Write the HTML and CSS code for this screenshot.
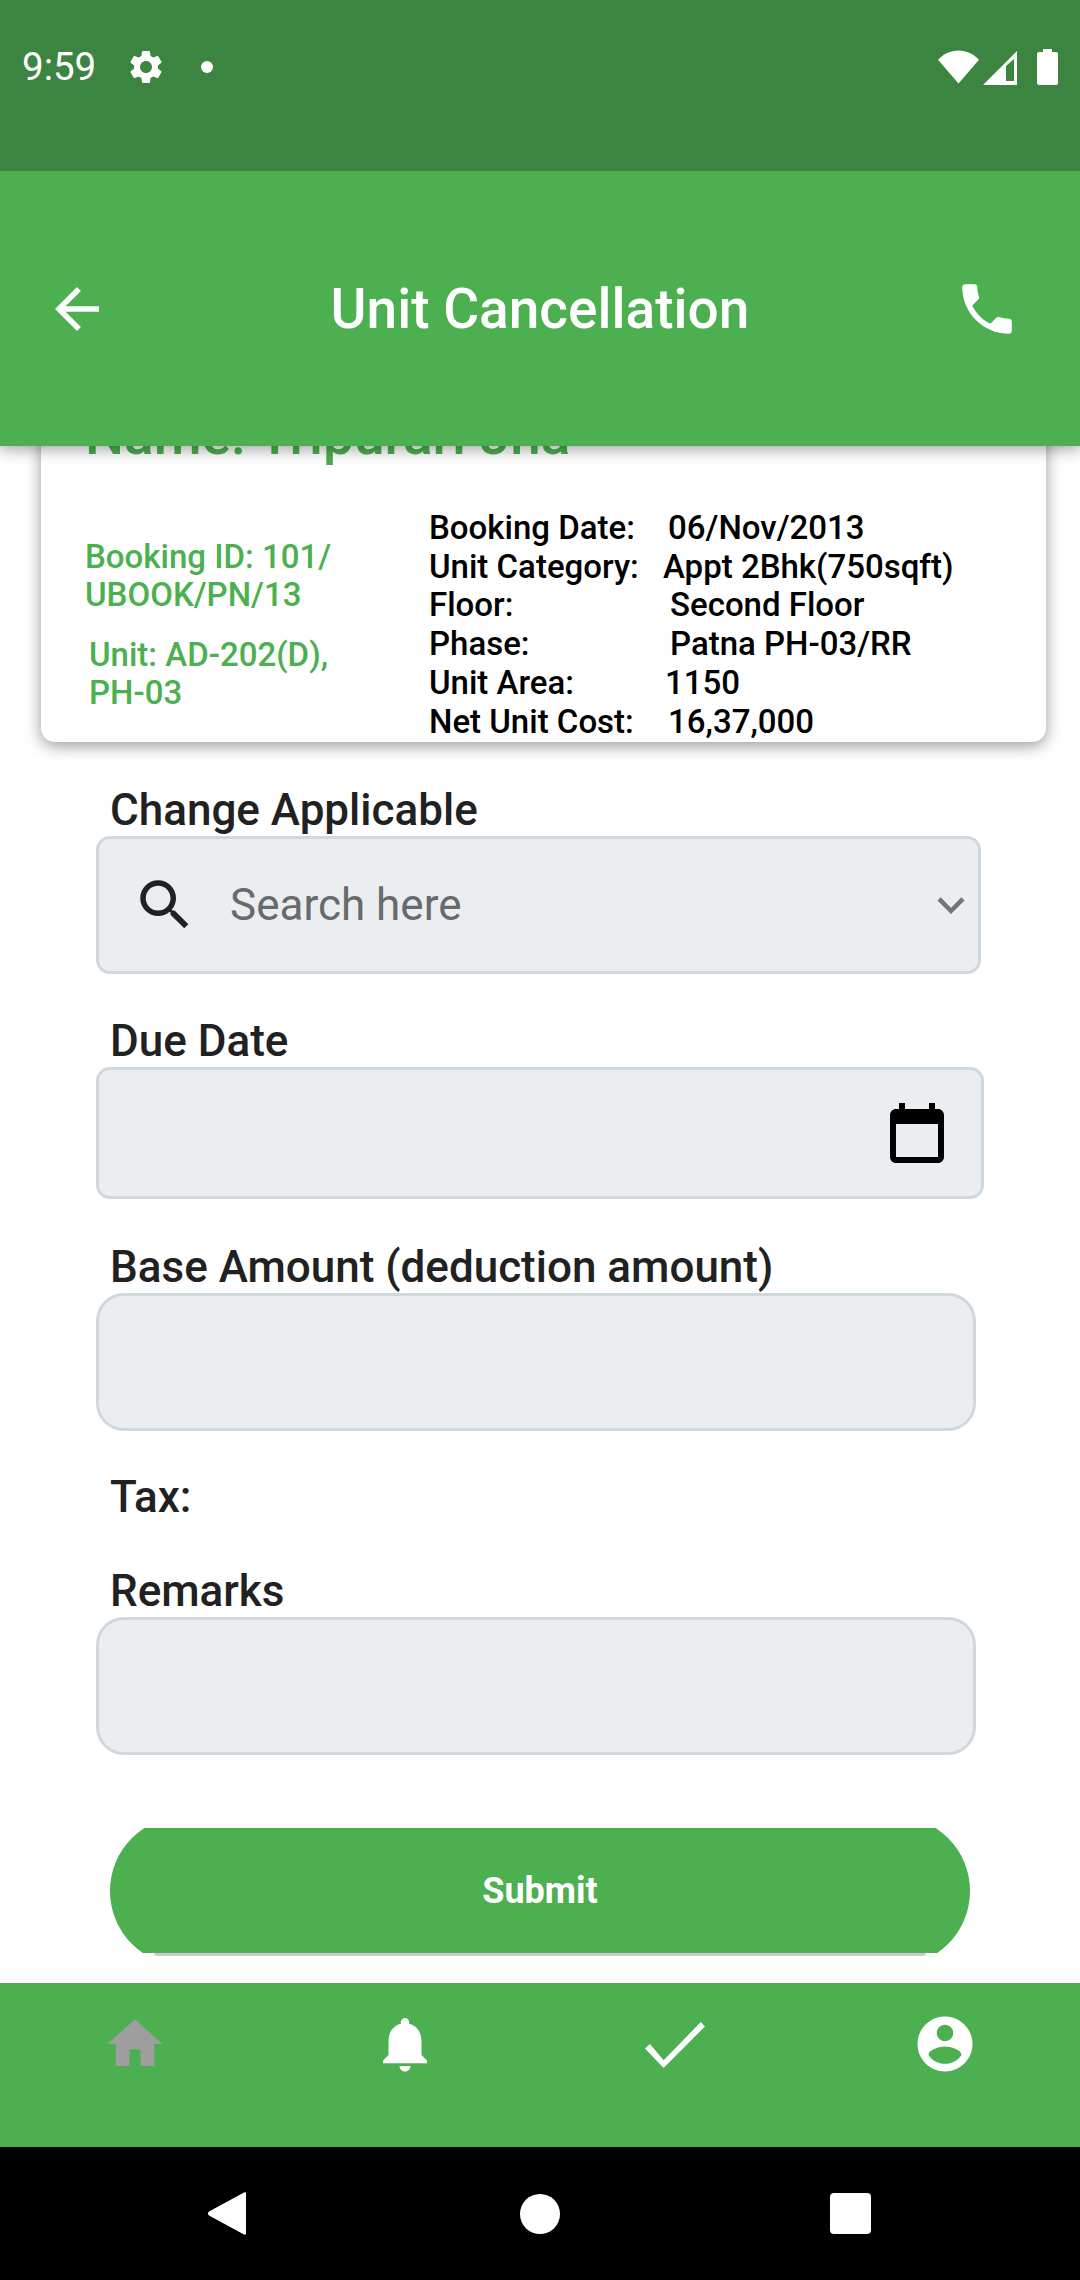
FILE: index.html
```html
<!DOCTYPE html>
<html lang="en">
<head>
  <meta charset="UTF-8">
  <meta name="viewport" content="width=device-width, initial-scale=1.0">
  <title>Unit Cancellation</title>
  <link rel="stylesheet" href="styles.css">
</head>
<body>
  <div class="status-bar">
    <div class="status-left">
      <span class="clock">9:59</span>
      <svg class="status-gear" viewBox="0 0 24 24"><path fill="#fff" d="M19.14 12.94c.04-.3.06-.61.06-.94 0-.32-.02-.64-.07-.94l2.03-1.58a.49.49 0 0 0 .12-.61l-1.92-3.32a.488.488 0 0 0-.59-.22l-2.39.96c-.5-.38-1.03-.7-1.62-.94l-.36-2.54a.484.484 0 0 0-.48-.41h-3.84c-.24 0-.43.17-.47.41l-.36 2.54c-.59.24-1.13.57-1.62.94l-2.39-.96c-.22-.08-.47 0-.59.22L2.74 8.87c-.12.21-.08.47.12.61l2.03 1.58c-.05.3-.09.63-.09.94s.02.64.07.94l-2.03 1.58a.49.49 0 0 0-.12.61l1.92 3.32c.12.22.37.29.59.22l2.39-.96c.5.38 1.03.7 1.62.94l.36 2.54c.05.24.24.41.48.41h3.84c.24 0 .44-.17.47-.41l.36-2.54c.59-.24 1.13-.56 1.62-.94l2.39.96c.22.08.47 0 .59-.22l1.92-3.32c.12-.22.07-.47-.12-.61l-2.01-1.58zM12 15.6c-1.98 0-3.6-1.62-3.6-3.6s1.62-3.6 3.6-3.6 3.6 1.62 3.6 3.6-1.62 3.6-3.6 3.6z"/></svg>
      <span class="status-dot"></span>
    </div>
    <div class="status-right">
      <svg class="status-wifi" viewBox="0 0 42 34"><path fill="#fff" d="M0 9.500C5.500 3.600 12.800 0 21 0s15.500 3.600 21 9.500L21 34z"/></svg>
      <svg class="status-signal" viewBox="0 0 34 34"><path fill="#fff" fill-rule="evenodd" d="M34 0v34H0zM31 8l-8 7v15h8z"/></svg>
      <svg class="status-battery" viewBox="0 0 21 36"><path fill="#fff" d="M6 0h9v3h4a2 2 0 0 1 2 2v29a2 2 0 0 1-2 2H2a2 2 0 0 1-2-2V5a2 2 0 0 1 2-2h4z"/></svg>
    </div>
  </div>

  <header class="app-bar">
    <svg class="back-icon" viewBox="0 0 24 24"><path fill="#fff" d="M20 11H7.830l5.590-5.590L12 4l-8 8 8 8 1.410-1.410L7.830 13H20v-2z"/></svg>
    <h1 class="app-title">Unit Cancellation</h1>
    <svg class="call-icon" viewBox="0 0 24 24"><path fill="#fff" d="M6.620 10.790c1.440 2.830 3.760 5.140 6.590 6.590l2.200-2.200c.27-.27.670-.36 1.020-.24 1.120.37 2.330.57 3.570.57.550 0 1 .45 1 1V20c0 .55-.45 1-1 1-9.390 0-17-7.610-17-17 0-.55.450-1 1-1h3.500c.55 0 1 .45 1 1 0 1.250.2 2.450.57 3.570.11.350.03.740-.25 1.020l-2.200 2.200z"/></svg>
  </header>

  <main class="content">
    <section class="card">
      <div class="card-name">Name: Tripurari Jha</div>
      <div class="card-body">
        <div class="card-left">
          <p class="booking-id">Booking ID: 101/<br>UBOOK/PN/13</p>
          <p class="unit-id">Unit: AD-202(D),<br>PH-03</p>
        </div>
        <div class="card-right">
          <div class="info-row"><span class="info-key">Booking Date:</span><span class="v-date">06/Nov/2013</span></div>
          <div class="info-row"><span class="info-key">Unit Category:</span><span class="v-cat">Appt 2Bhk(750sqft)</span></div>
          <div class="info-row"><span class="info-key">Floor:</span><span class="v-floor">Second Floor</span></div>
          <div class="info-row"><span class="info-key">Phase:</span><span class="v-floor">Patna PH-03/RR</span></div>
          <div class="info-row"><span class="info-key">Unit Area:</span><span class="v-area">1150</span></div>
          <div class="info-row"><span class="info-key">Net Unit Cost:</span><span class="v-date">16,37,000</span></div>
        </div>
      </div>
    </section>

    <form class="form">
      <div class="field field-change">
        <label class="field-label">Change Applicable</label>
        <div class="input input-search">
          <svg class="search-icon" viewBox="0 0 24 24"><path fill="#212121" d="M15.500 14h-.79l-.28-.27A6.471 6.471 0 0 0 16 9.500 6.500 6.500 0 1 0 9.500 16c1.610 0 3.090-.59 4.230-1.570l.27.28v.79l5 4.990L20.490 19l-4.990-5zm-6 0C7.010 14 5 11.990 5 9.500S7.010 5 9.500 5 14 7.010 14 9.500 11.990 14 9.500 14z"/></svg>
          <span class="placeholder">Search here</span>
          <svg class="chevron-icon" viewBox="0 0 24 24"><path fill="#757575" d="M16.590 8.590 12 13.170 7.410 8.590 6 10l6 6 6-6z"/></svg>
        </div>
      </div>

      <div class="field field-date">
        <label class="field-label">Due Date</label>
        <div class="input input-date">
          <svg class="calendar-icon" viewBox="0 0 24 24"><path fill="#000" d="M19 3h-1V1h-2v2H8V1H6v2H5c-1.100 0-2 .9-2 2v14c0 1.100.9 2 2 2h14c1.100 0 2-.9 2-2V5c0-1.100-.9-2-2-2zm0 16H5V8h14v11z"/></svg>
        </div>
      </div>

      <div class="field field-base">
        <label class="field-label">Base Amount (deduction amount)</label>
        <div class="input input-round"></div>
      </div>

      <div class="field-label tax-label">Tax:</div>

      <div class="field field-remarks">
        <label class="field-label">Remarks</label>
        <div class="input input-round"></div>
      </div>

      <div class="submit-wrap">
        <button class="submit-btn" type="button">Submit</button>
      </div>
    </form>
  </main>

  <nav class="bottom-nav">
    <svg class="nav-icon" viewBox="0 0 24 24"><path fill="#9e9e9e" d="M10 20v-6h4v6h5v-8h3L12 3 2 12h3v8z"/></svg>
    <svg class="nav-icon" viewBox="0 0 24 24"><path fill="#fff" d="M12 22c1.100 0 2-.9 2-2h-4c0 1.100.9 2 2 2zm6-6v-5c0-3.070-1.630-5.640-4.500-6.320V4c0-.83-.67-1.500-1.500-1.500s-1.500.67-1.500 1.500v.68C7.640 5.360 6 7.920 6 11v5l-2 2v1h16v-1l-2-2z"/></svg>
    <svg class="nav-check" viewBox="0 0 60.300 46"><path fill="#fff" d="M0 26.600 5 22l13.700 16.300L56 0l4.300 4.300L18.700 46z"/></svg>
    <svg class="nav-icon" viewBox="0 0 24 24"><path fill="#fff" d="M12 2C6.480 2 2 6.480 2 12s4.480 10 10 10 10-4.480 10-10S17.520 2 12 2zm0 3c1.660 0 3 1.340 3 3s-1.340 3-3 3-3-1.340-3-3 1.340-3 3-3zm0 14.200c-2.500 0-4.710-1.280-6-3.220.03-1.990 4-3.080 6-3.080 1.990 0 5.970 1.090 6 3.080-1.290 1.940-3.500 3.220-6 3.220z"/></svg>
  </nav>

  <div class="system-nav">
    <svg class="sys-back" viewBox="1 0 38 45"><path fill="#fff" d="M37 1.500c1-.8 2-.2 2 1v40c0 1.200-1 1.800-2 1L2 24.500c-1.400-1-1.400-3 0-4z"/></svg>
    <span class="sys-home"></span>
    <span class="sys-recent"></span>
  </div>
</body>
</html>
```

FILE: styles.css
```css
* {
  box-sizing: border-box;
}
html, body {
  margin: 0;
  height: 2280px;
  overflow: hidden;
}
body {
  display: flex;
  flex-direction: column;
  width: 1080px;
  font-family: Roboto, "Liberation Sans", sans-serif;
  background-color: #fff;
  color: #212121;
}

/* status bar */
.status-bar {
  position: relative;
  z-index: 3;
  display: flex;
  justify-content: space-between;
  align-items: flex-start;
  flex: none;
  height: 171px;
  padding: 47px 22px 0 22px;
  background-color: #3b8540;
  color: #fff;
}
.status-left {
  display: flex;
  align-items: center;
  height: 40px;
}
.clock {
  width: 73px;
  font-size: 38.5px;
  line-height: 40px;
  white-space: nowrap;
}
.status-gear {
  width: 40px;
  height: 40px;
  margin-left: 31px;
}
.status-dot {
  width: 12px;
  height: 12px;
  margin-left: 35px;
  border-radius: 50%;
  background-color: #fff;
}
.status-right {
  display: flex;
  align-items: flex-end;
  height: 38px;
}
.status-wifi {
  width: 41px;
  height: 34px;
  margin-bottom: 1px;
}
.status-signal {
  width: 34px;
  height: 34px;
  margin-left: 4px;
}
.status-battery {
  width: 21px;
  height: 36px;
  margin-left: 20px;
}

/* app bar */
.app-bar {
  position: relative;
  z-index: 2;
  display: flex;
  justify-content: space-between;
  align-items: center;
  flex: none;
  height: 275px;
  padding: 0 60px 0 44px;
  background-color: #4caf50;
  box-shadow: 0 4px 14px rgba(0, 0, 0, 0.35);
}
.back-icon {
  width: 66px;
  height: 66px;
}
.app-title {
  margin: 0 0 0 16px;
  font-size: 55px;
  font-weight: 500;
  color: #fff;
}
.call-icon {
  width: 66px;
  height: 66px;
}

/* main */
.content {
  flex: 1;
  overflow: hidden;
  min-height: 0;
}
.card {
  height: 337px;
  margin: -41px 34px 0 41px;
  padding: 0 20px 0 44px;
  background-color: #fff;
  border-radius: 0 0 14px 14px;
  box-shadow: 0 4px 16px rgba(0, 0, 0, 0.4);
}
.card-name {
  height: 60px;
  font-size: 55px;
  line-height: 60px;
  font-weight: 500;
  color: #4caf50;
  white-space: nowrap;
}
.card-body {
  display: flex;
}
.card-left {
  width: 344px;
  padding-top: 73px;
  font-size: 33px;
  line-height: 38px;
  font-weight: 500;
  color: #4caf50;
}
.booking-id {
  margin: 0;
}
.unit-id {
  margin: 22px 0 0 4px;
}
.card-right {
  padding-top: 44px;
  font-size: 33px;
  line-height: 38.7px;
  font-weight: 500;
  color: #000;
}
.info-row {
  display: flex;
  white-space: nowrap;
}
.info-key {
  width: 233px;
}
.v-cat {
  margin-left: 1px;
}
.v-area {
  margin-left: 3px;
}
.v-floor {
  margin-left: 8px;
}
.v-date {
  margin-left: 6px;
}

/* form */
.form {
  padding: 0 96px;
}
.field-label {
  display: block;
  margin-left: 14px;
  font-size: 44px;
  line-height: 51px;
  font-weight: 500;
  color: #212121;
}
.field-change {
  margin-top: 43px;
}
.field-date {
  margin-top: 42px;
}
.field-base {
  margin-top: 43px;
}
.tax-label {
  margin-top: 41px;
}
.field-remarks {
  margin-top: 43px;
}
.input {
  display: flex;
  align-items: center;
  background-color: #eaeef1;
  border: 3px solid #cfd8dc;
  border-radius: 14px;
}
.input-search {
  width: 885px;
  height: 138px;
  padding: 0 0 0 33px;
}
.input-date {
  justify-content: flex-end;
  width: 888px;
  height: 132px;
  padding-right: 28px;
}
.input-round {
  width: 880px;
  height: 138px;
  border-radius: 28px;
}
.search-icon {
  width: 66px;
  height: 66px;
}
.placeholder {
  flex: 1;
  margin-left: 32px;
  font-size: 44px;
  color: #666a6d;
}
.chevron-icon {
  width: 54px;
  height: 54px;
}
.calendar-icon {
  width: 72px;
  height: 72px;
  margin-top: 5px;
}
.submit-wrap {
  display: flow-root;
  width: 860px;
  height: 125px;
  margin: 73px 0 0 14px;
}
.submit-wrap::after {
  content: "";
  display: block;
  height: 3px;
  margin: -12.5px 44px 0;
  border-radius: 0 0 8px 8px;
  background-color: rgba(0, 0, 0, 0.2);
}
.submit-btn {
  display: block;
  width: 100%;
  height: 150px;
  margin-top: -12.5px;
  border: none;
  border-radius: 75px;
  clip-path: inset(12.5px 0);
  background-color: #4caf50;
  color: #fff;
  font-family: inherit;
  font-size: 36px;
  font-weight: 700;
}

/* bottom */
.bottom-nav {
  position: relative;
  display: grid;
  grid-template-columns: repeat(4, 270px);
  justify-items: center;
  align-items: start;
  flex: none;
  height: 164px;
  padding-top: 28px;
  background-color: #4caf50;
}
.nav-icon {
  width: 66px;
  height: 66px;
}
.nav-check {
  width: 60px;
  height: 46px;
  margin-top: 11px;
}
.system-nav {
  display: flex;
  align-items: center;
  justify-content: space-between;
  flex: none;
  height: 133px;
  padding: 0 209px 0 207px;
  background-color: #000;
}
.sys-back {
  width: 40px;
  height: 45px;
}
.sys-home {
  width: 40px;
  height: 40px;
  margin-left: 2px;
  border-radius: 50%;
  background-color: #fff;
}
.sys-recent {
  width: 41px;
  height: 41px;
  border-radius: 4px;
  background-color: #fff;
}
```
